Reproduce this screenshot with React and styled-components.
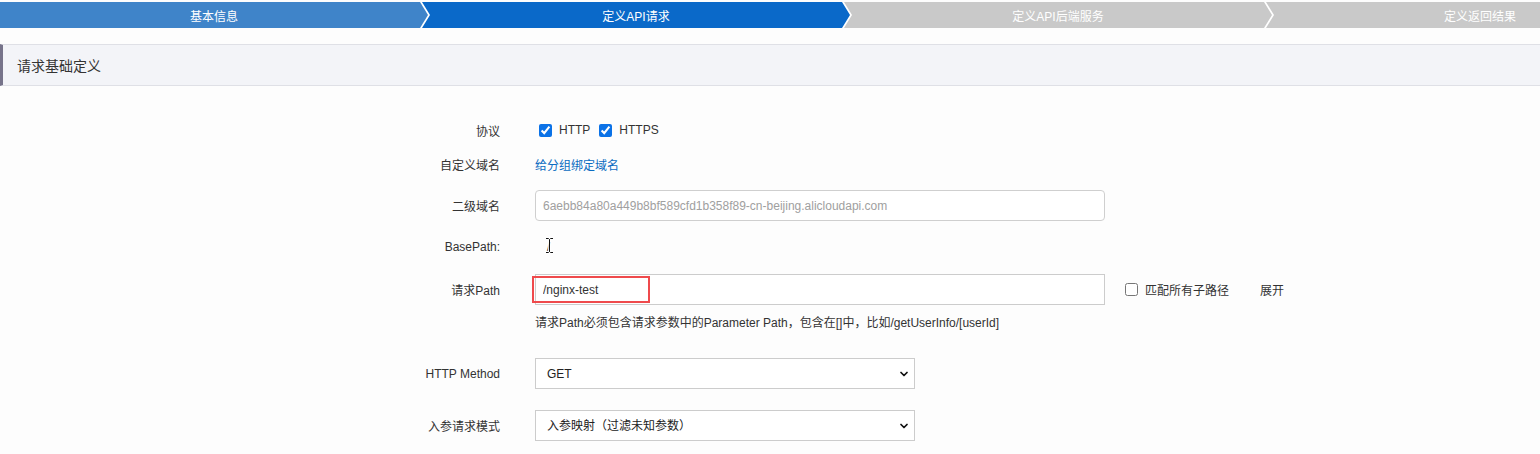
import React from 'react'
import styled, { createGlobalStyle } from 'styled-components'
import { ChevronDown } from 'lucide-react'

const GlobalStyle = createGlobalStyle`
  html, body {
    margin: 0;
    padding: 0;
    background: #fff;
  }
  body {
    font-family: "Liberation Sans", "Noto Sans CJK SC", sans-serif;
    font-size: 12px;
    color: #333;
  }
`

const Page = styled.div`
  width: 1540px;
  height: 454px;
  overflow: hidden;
  background: #fdfdfd;
`

const Steps = styled.div`
  display: flex;
  margin-top: 2px;
  height: 26px;
  overflow: hidden;
  background: #fff;
`

const Step = styled.div`
  flex: 0 0 428px;
  height: 26px;
  margin-left: ${(p) => (p.$first ? '0' : '-6px')};
  display: flex;
  align-items: center;
  justify-content: center;
  color: #fff;
  font-size: 12px;
  background: ${(p) => p.$bg};
  clip-path: ${(p) =>
    p.$first
      ? 'polygon(0 0, calc(100% - 8px) 0, 100% 50%, calc(100% - 8px) 100%, 0 100%)'
      : 'polygon(0 0, calc(100% - 8px) 0, 100% 50%, calc(100% - 8px) 100%, 0 100%, 8px 50%)'};
`

const SectionHead = styled.div`
  margin-top: 16px;
  height: 40px;
  display: flex;
  align-items: center;
  padding-left: 14px;
  background: #f3f4f8;
  border-top: 1px solid #dfe0e6;
  border-bottom: 1px solid #dfe0e6;
  border-left: 3px solid #76738a;
  font-size: 14px;
  color: #333;
`

const Form = styled.div`
  display: flex;
  flex-direction: column;
  padding-top: 27px;
`

const Row = styled.div`
  display: flex;
  align-items: center;
  height: ${(p) => p.$h}px;
  margin-bottom: ${(p) => p.$mb || 0}px;
`

const Label = styled.div`
  flex: 0 0 500px;
  text-align: right;
  font-size: 12px;
  color: #333;
`

const Control = styled.div`
  position: relative;
  display: flex;
  align-items: center;
  margin-left: 35px;
  gap: 5px;
`

const CheckLabel = styled.label`
  display: inline-flex;
  align-items: center;
  gap: 7px;
  font-size: 12px;
  color: #333;

  input {
    margin: 0 0 0 4px;
    width: 13px;
    height: 13px;
    accent-color: #0b72e7;
  }
`

const Link = styled.a`
  color: #0b6cc1;
  text-decoration: none;
  font-size: 12px;
`

const TextInput = styled.input`
  box-sizing: border-box;
  width: 570px;
  height: 31px;
  padding: 0 7px;
  border: 1px solid ${(p) => (p.$rounded ? '#cfcfcf' : '#cccccc')};
  border-radius: ${(p) => (p.$rounded ? '4px' : '0')};
  background: #fff;
  font-family: "Liberation Sans", "Noto Sans CJK SC", sans-serif;
  font-size: 12px;
  color: ${(p) => (p.disabled ? '#a0a0a0' : '#333')};
  outline: none;
`

const Highlight = styled.div`
  position: absolute;
  left: -3px;
  top: 2px;
  width: 118px;
  height: 27px;
  box-sizing: border-box;
  border: 2px solid #ef4a4c;
  pointer-events: none;
`

const Slash = styled.span`
  position: relative;
  margin-left: 12px;
  font-size: 12px;
  color: #333;
`

const Cursor = styled.svg`
  position: absolute;
  left: -2px;
  top: -3px;
`

const Help = styled.div`
  margin-left: 535px;
  font-size: 12px;
  color: #333;
  height: 16px;
  line-height: 16px;
  margin-bottom: 17px;
`

const SideActions = styled.div`
  display: flex;
  align-items: center;
  margin-left: 16px;
`

const Expand = styled.span`
  margin-left: 31px;
  font-size: 12px;
  color: #333;
`

const SelectBox = styled.div`
  position: relative;
  width: 380px;
  height: 31px;
`

const Select = styled.select`
  appearance: none;
  box-sizing: border-box;
  width: 100%;
  height: 100%;
  padding: 0 11px;
  border: 1px solid #cccccc;
  border-radius: 0;
  background: #fff;
  font-family: "Liberation Sans", "Noto Sans CJK SC", sans-serif;
  font-size: 12px;
  color: #222;
  outline: none;
`

const Arrow = styled(ChevronDown)`
  position: absolute;
  right: 5px;
  top: 10px;
  pointer-events: none;
`

const steps = [
  { name: '基本信息', bg: '#3f84c9' },
  { name: '定义API请求', bg: '#0a69c9' },
  { name: '定义API后端服务', bg: '#c9c9c9' },
  { name: '定义返回结果', bg: '#c9c9c9' },
]

function App() {
  return (
    <Page>
      <GlobalStyle />
      <Steps>
        {steps.map((s, i) => (
          <Step key={s.name} $bg={s.bg} $first={i === 0}>
            {s.name}
          </Step>
        ))}
      </Steps>

      <SectionHead>请求基础定义</SectionHead>

      <Form>
        <Row $h={34}>
          <Label>协议</Label>
          <Control>
            <CheckLabel>
              <input type="checkbox" defaultChecked />
              HTTP
            </CheckLabel>
            <CheckLabel>
              <input type="checkbox" defaultChecked />
              HTTPS
            </CheckLabel>
          </Control>
        </Row>

        <Row $h={34}>
          <Label>自定义域名</Label>
          <Control>
            <Link href="#">给分组绑定域名</Link>
          </Control>
        </Row>

        <Row $h={49}>
          <Label>二级域名</Label>
          <Control>
            <TextInput
              $rounded
              disabled
              defaultValue="6aebb84a80a449b8bf589cfd1b358f89-cn-beijing.alicloudapi.com"
            />
          </Control>
        </Row>

        <Row $h={34}>
          <Label>BasePath:</Label>
          <Control>
            <Slash>
              /
              <Cursor width="9" height="17" viewBox="0 0 9 17">
                <path
                  d="M1 1.5h2.5l1 1 1-1H8M4.5 2.5v12M1 15.5h2.5l1-1 1 1H8"
                  fill="none"
                  stroke="#fff"
                  strokeWidth="2.4"
                />
                <path
                  d="M1 1.5h2.5l1 1 1-1H8M4.5 2.5v12M1 15.5h2.5l1-1 1 1H8"
                  fill="none"
                  stroke="#111"
                  strokeWidth="1"
                />
              </Cursor>
            </Slash>
          </Control>
        </Row>

        <Row $h={51}>
          <Label>请求Path</Label>
          <Control>
            <TextInput defaultValue="/nginx-test" />
            <Highlight />
          </Control>
          <SideActions>
            <CheckLabel>
              <input type="checkbox" />
              匹配所有子路径
            </CheckLabel>
            <Expand>展开</Expand>
          </SideActions>
        </Row>

        <Help>请求Path必须包含请求参数中的Parameter Path，包含在[]中，比如/getUserInfo/[userId]</Help>

        <Row $h={51}>
          <Label>HTTP Method</Label>
          <Control>
            <SelectBox>
              <Select defaultValue="GET">
                <option>GET</option>
                <option>POST</option>
                <option>PUT</option>
                <option>DELETE</option>
              </Select>
              <Arrow size={12} strokeWidth={3.5} color="#111" />
            </SelectBox>
          </Control>
        </Row>

        <Row $h={53}>
          <Label>入参请求模式</Label>
          <Control>
            <SelectBox>
              <Select defaultValue="入参映射（过滤未知参数）">
                <option>入参映射（过滤未知参数）</option>
                <option>入参映射（透传未知参数）</option>
                <option>入参透传</option>
              </Select>
              <Arrow size={12} strokeWidth={3.5} color="#111" />
            </SelectBox>
          </Control>
        </Row>
      </Form>
    </Page>
  )
}

export default App
